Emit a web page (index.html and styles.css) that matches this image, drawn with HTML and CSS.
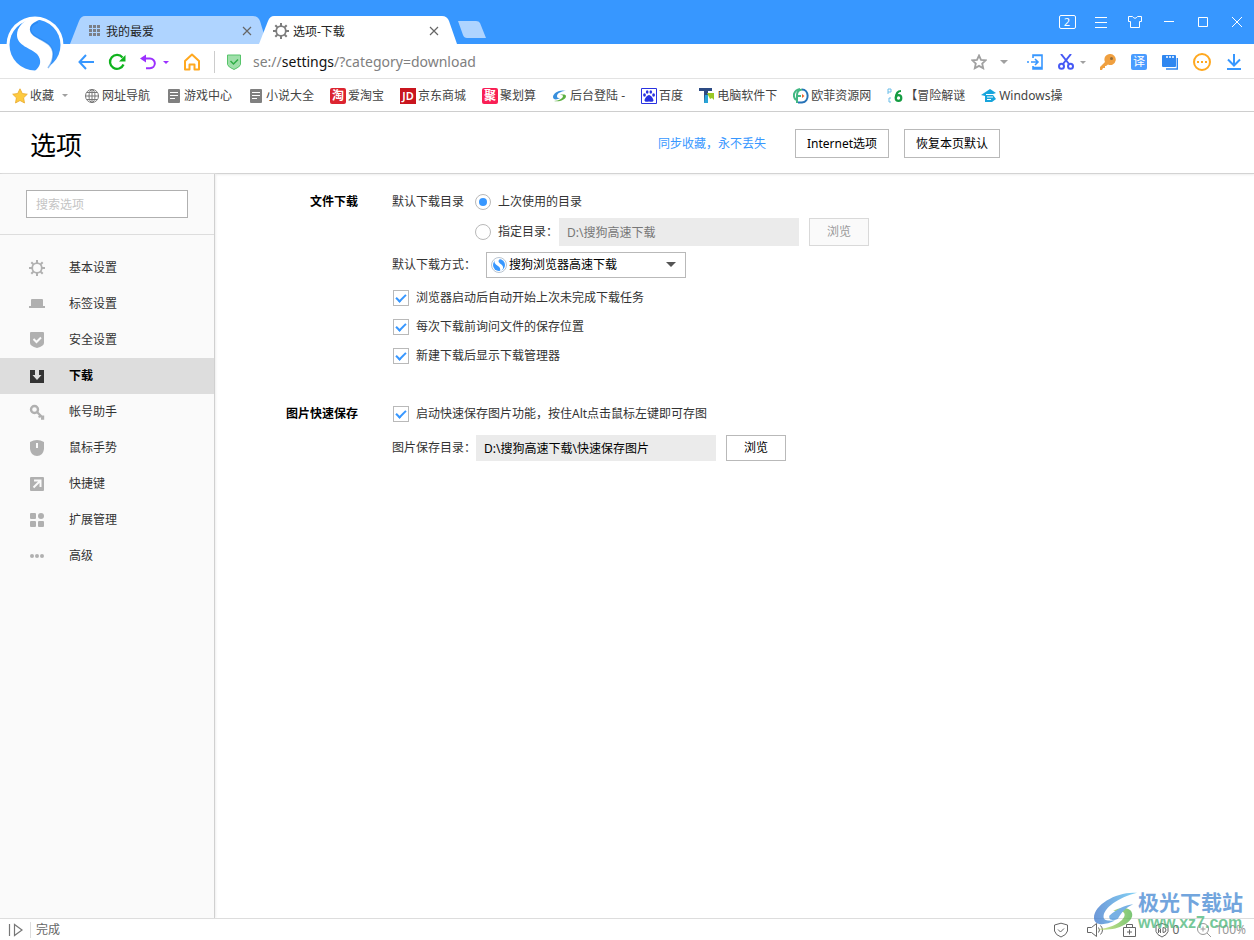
FILE: index.html
```html
<!DOCTYPE html>
<html lang="zh-CN">
<head>
<meta charset="utf-8">
<title>选项-下载</title>
<link rel="stylesheet" href="styles.css">
</head>
<body>
<div class="browser">
  <header class="titlebar">
    <svg class="logo" viewBox="0 0 58 58" aria-label="搜狗">
      <circle cx="29" cy="29" r="28.500" fill="#fff"/>
      <circle cx="29" cy="29" r="25.500" fill="#3797ff"/>
      <path d="M38 2C34 4 24 6 24 13 24 24 47 23 47 38 47 46 43 51 40 56L29 55C35 50 36 44 31 38 25 32 11 30 11 19 11 11 17 6 24 2Z" fill="#fff"/>
      <path d="M32 6C27 8 24.500 10 24.500 13.500 25 24 47 23 47 38 47 44 45 48 42 52" fill="none" stroke="#1b7be6" stroke-width="1.500" opacity=".5"/>
    </svg>
    <nav class="tabs">
      <div class="tab">
        <svg class="tab-bg" viewBox="0 0 197 28" preserveAspectRatio="none"><path d="M0 28 9 5Q11 0 15 0H183Q188 0 190 5L197 28Z" fill="#afd4ff"/></svg>
        <svg class="i16" viewBox="0 0 16 16" fill="#7b7f86"><path d="M0 2h3v3H0zM4 2h3v3H4zM8 2h3v3H8zM0 6h3v3H0zM4 6h3v3H4zM8 6h3v3H8zM0 10h3v3H0zM4 10h3v3H4zM8 10h3v3H8z"/></svg>
        <a class="tab-name" href="#">我的最爱</a>
        <button class="tab-close" aria-label="关闭"><svg viewBox="0 0 10 10"><path d="m1 1 8 8M9 1 1 9"/></svg></button>
      </div>
      <div class="tab tab-active">
        <svg class="tab-bg" viewBox="0 0 198 28" preserveAspectRatio="none"><path d="M0 28 9 5Q11 0 15 0H183Q188 0 190 5L198 28Z" fill="#fff"/></svg>
        <svg class="i16" viewBox="0 0 16 16" fill="none" stroke="#7d7d7d"><circle cx="8" cy="8" r="4.800" stroke-width="1.800"/><path stroke-width="2" d="M8 0v3M8 13v3M0 8h3M13 8h3M2.300 2.300l2 2M11.700 11.700l2 2M2.300 13.700l2-2M11.700 4.300l2-2"/></svg>
        <a class="tab-name" href="#">选项-下载</a>
        <button class="tab-close" aria-label="关闭"><svg viewBox="0 0 10 10"><path d="m1 1 8 8M9 1 1 9"/></svg></button>
      </div>
      <button class="new-tab" aria-label="新标签"><svg viewBox="0 0 28 17"><path d="M0 0H18Q21 0 22 2L28 17H9Q6 17 5 14Z" fill="#afd4ff"/></svg></button>
    </nav>
    <div class="window-buttons">
      <button aria-label="标签数量"><span class="count">2</span></button>
      <button aria-label="菜单"><svg viewBox="0 0 16 16"><path d="M2 3.500h12M2 8.500h12M2 13.500h12"/></svg></button>
      <button aria-label="皮肤"><svg viewBox="0 0 16 16"><path d="M5.500 2.500 1.500 2.500V7.500H3.500V13.500H12.500V7.500H14.500V2.500H10.500Q8 6 5.500 2.500Z"/></svg></button>
      <button aria-label="最小化"><svg viewBox="0 0 16 16"><path d="M3 7.500h10"/></svg></button>
      <button aria-label="最大化"><svg viewBox="0 0 16 16"><path d="M3.500 3.500h9v9h-9z"/></svg></button>
      <button aria-label="关闭窗口"><svg viewBox="0 0 16 16"><path d="m3 3 10 10M13 3 3 13"/></svg></button>
    </div>
  </header>

  <div class="toolbar">
    <div class="nav-buttons">
      <button aria-label="后退"><svg class="i16" viewBox="0 0 16 16" fill="none" stroke="#3797ff" stroke-width="2"><path d="M8 1 1.500 8 8 15M1.500 8H16"/></svg></button>
      <button aria-label="刷新"><svg class="i18" viewBox="0 0 18 18"><path d="M15.500 11.500A7 7 0 1 1 14.500 4.500" fill="none" stroke="#0fb31d" stroke-width="2.300"/><path d="M17.500 2v6.500H11z" fill="#0fb31d"/></svg></button>
      <button class="undo" aria-label="恢复"><svg class="i16" viewBox="0 0 16 16"><path d="M2 4.500H10a4.800 4.800 0 0 1 0 9.700H6" fill="none" stroke="#9b30ff" stroke-width="2"/><path d="M0 4.500 6 .5v8z" fill="#9b30ff"/></svg><svg class="caret" viewBox="0 0 6 3"><path d="M0 0h6L3 3z" fill="#9b30ff"/></svg></button>
      <button aria-label="主页"><svg class="i18" viewBox="0 0 18 18"><path d="M2 16.500V8L9 1.500 16 8V16.500H11.500V11.500H6.500V16.500Z" fill="none" stroke="#ffa81f" stroke-width="2" stroke-linejoin="round"/></svg></button>
    </div>
    <div class="address">
      <svg class="i16" viewBox="0 0 16 16"><path d="M1.500 1h13v9.500Q14 13 8 15.500 2 13 1.500 10.500Z" fill="#9fdfaa" stroke="#57c46a"/><path d="m4.500 7 3 3L12 5.500" fill="none" stroke="#2fae46" stroke-width="1.500"/></svg>
      <a class="url" href="#">se://<b>settings</b>/?category=download</a>
    </div>
    <div class="tools">
      <button class="tool-star" aria-label="收藏本页"><svg class="i16" viewBox="0 0 16 16"><path d="m8 1.500 2 4.300 4.700.5-3.500 3.200 1 4.700L8 11.900l-4.200 2.300 1-4.700L1.300 6.300 6 5.800z" fill="none" stroke="#a0a0a0" stroke-width="1.800"/></svg><svg class="caret-lg" viewBox="0 0 8 4"><path d="M0 0h8L4 4z" fill="#a0a0a0"/></svg></button>
      <button aria-label="发送到手机"><svg class="i16" viewBox="0 0 16 16" fill="none" stroke="#3797ff" stroke-width="1.600"><path d="M6 4V1h9v14H6v-3M6 1.500h9M6 13.500h9M0 8h2M4 8h7M8 5l3 3-3 3"/></svg></button>
      <button class="tool-cut" aria-label="截图"><svg class="i16" viewBox="0 0 16 16" fill="none" stroke="#4659f5" stroke-width="2"><path d="m3 0 8 10M13 0 5 10"/><circle cx="3.500" cy="12.200" r="2.500"/><circle cx="12.500" cy="12.200" r="2.500"/></svg><svg class="caret" viewBox="0 0 6 3"><path d="M0 0h6L3 3z" fill="#a0a0a0"/></svg></button>
      <button aria-label="密码"><svg class="i16" viewBox="0 0 16 16"><path d="M10 0a5.500 5.500 0 1 1-2 10.500L6 12H5v2H3l-1 2H0v-3l5-5A5.500 5.500 0 0 1 10 0z" fill="#f0a040"/><circle cx="11.500" cy="4.500" r="1.500" fill="#8d6a3c"/></svg></button>
      <button aria-label="翻译"><span class="translate">译</span></button>
      <button aria-label="多窗口"><svg class="i16" viewBox="0 0 16 16"><path d="M1 1h12q1 0 1 1v10q0 1-1 1H1q-1 0-1-1V2q0-1 1-1z" fill="#2f87f0"/><path d="M15.300 4v11H4" fill="none" stroke="#2f87f0" stroke-width="1.400"/><path d="M4 3h2M7 3h2M10 3h2" stroke="#fff" stroke-width="1.500"/></svg></button>
      <button aria-label="更多"><svg class="i18" viewBox="0 0 18 18"><circle cx="9" cy="9" r="8" fill="none" stroke="#ffa81f" stroke-width="2"/><path d="M4 8h2v2H4zM8 8h2v2H8zM12 8h2v2h-2z" fill="#ffa81f"/></svg></button>
      <button aria-label="下载"><svg class="i16" viewBox="0 0 16 16" fill="none" stroke="#3797ff" stroke-width="2"><path d="M8 0v11M2 5.500l6 6 6-6M1 15h14"/></svg></button>
    </div>
  </div>

  <nav class="bookmarks">
    <a href="#"><svg class="i16" viewBox="0 0 16 16"><path d="m8 .8 2.300 4.700 5 .7-3.700 3.600.9 5.200L8 12.500 3.500 15l.9-5.200L.7 6.200l5-.7z" fill="#fdca3f" stroke="#e8a82c" stroke-width=".8"/></svg>收藏<svg class="caret fav-caret" viewBox="0 0 6 3"><path d="M0 0h6L3 3z" fill="#a0a0a0"/></svg></a>
    <a href="#"><svg class="i16" viewBox="0 0 16 16" fill="none" stroke="#777"><circle cx="8" cy="8" r="6.500"/><ellipse cx="8" cy="8" rx="3" ry="6.500"/><path d="M1.500 8h13M8 1.500v13M3 4.500h10M3 11.500h10"/></svg>网址导航</a>
    <a href="#"><svg class="i16" viewBox="0 0 16 16"><rect x="2" y="1" width="12" height="14" rx="1" fill="#808080"/><path d="M4 4.500h8M4 7.500h8M4 10.500h5" stroke="#fff"/></svg>游戏中心</a>
    <a href="#"><svg class="i16" viewBox="0 0 16 16"><rect x="2" y="1" width="12" height="14" rx="1" fill="#808080"/><path d="M4 4.500h8M4 7.500h8M4 10.500h5" stroke="#fff"/></svg>小说大全</a>
    <a href="#"><span class="site red">淘</span>爱淘宝</a>
    <a href="#"><span class="site jd">JD</span>京东商城</a>
    <a href="#"><span class="site pink">聚</span>聚划算</a>
    <a href="#"><svg class="i16" viewBox="0 0 16 16"><path d="M14 3C8 1 1 5 1 9c0 3 4 3 7 1-2 0-3 0-3-2 0-3 5-5 9-5z" fill="#388fdc"/><path d="M8 7c4-1 6 0 6 1 0 4-7 6-12 5 5 0 9-3 9-5 0-1-1-1-3-1z" fill="#5caf41"/></svg>后台登陆 -</a>
    <a href="#"><svg class="i16" viewBox="0 0 16 16"><path d="M.5.500h15v15H.500z" fill="#fff" stroke="#2932e1"/><g fill="#2932e1"><ellipse cx="3.500" cy="7" rx="1.400" ry="1.800"/><ellipse cx="6.200" cy="4" rx="1.300" ry="1.800"/><ellipse cx="9.800" cy="4" rx="1.300" ry="1.800"/><ellipse cx="12.600" cy="7" rx="1.400" ry="1.800"/><path d="M8 7c2 0 4.500 4 4.500 5.500S10 14 8 13.500C6 14 3.500 14 3.500 12.500S6 7 8 7z"/></g></svg>百度</a>
    <a href="#"><svg class="i16" viewBox="0 0 16 16"><path d="M0 0h13v3H9v12H5V3H0z" fill="#2d4b84"/><path d="M6 7h3v8H5z" fill="#29a5d8"/><path d="M8 5h7v7l-2-2-2 1-2-4z" fill="#9ac927"/></svg>电脑软件下</a>
    <a href="#"><svg class="i16" viewBox="0 0 16 16" fill="none" stroke-width="2"><path d="M9 1.500c7 0 8 12 0 13H5" stroke="#2672b7"/><path d="M4 15V7q0-5 5-5.500" stroke="#42b883"/><path d="M3 12C-1 8 1 2 7 1M4 8h4" stroke="#42b883"/><path d="m9 6 2.500 2L9 10z" fill="#f0642d"/></svg>欧菲资源网</a>
    <a href="#"><svg class="i16" viewBox="0 0 16 16"><path d="M1 6V1h3v3H1M4 10H2v4h2" fill="none" stroke="#6bbde9"/><path d="M14 3q-5 0-5 7" fill="none" stroke="#159c42" stroke-width="2.200"/><circle cx="11.500" cy="10" r="2.800" fill="none" stroke="#159c42" stroke-width="2.200"/></svg>【冒险解谜</a>
    <a href="#"><svg class="i16" viewBox="0 0 16 16"><path d="M0 7 9 1l6 4-3 1v1l3 4-4 3H4V8z" fill="#18a5dc"/><path d="M5 6.500h7M6 9h6M6 11.500h4" stroke="#fff" stroke-width="1"/></svg>Windows操</a>
  </nav>

  <div class="page-head">
    <div class="head-inner">
      <h1>选项</h1>
      <a class="sync" href="#">同步收藏，永不丢失</a>
      <div class="head-buttons">
        <button class="btn">Internet选项</button>
        <button class="btn">恢复本页默认</button>
      </div>
    </div>
  </div>

  <div class="body">
    <aside class="sidebar">
      <div class="search"><input type="text" placeholder="搜索选项" aria-label="搜索选项"></div>
      <nav class="menu">
        <a href="#"><svg class="i16" viewBox="0 0 16 16" fill="none" stroke="#b0b0b0"><circle cx="8" cy="8" r="4.800" stroke-width="1.800"/><path stroke-width="2" d="M8 0v3M8 13v3M0 8h3M13 8h3M2.300 2.300l2 2M11.700 11.700l2 2M2.300 13.700l2-2M11.700 4.300l2-2"/></svg>基本设置</a>
        <a href="#"><svg class="i16" viewBox="0 0 16 16" fill="#b0b0b0"><path d="M2 4q0-1 1-1h10q1 0 1 1v6h2v2H0v-2h2z"/></svg>标签设置</a>
        <a href="#"><svg class="i16" viewBox="0 0 16 16"><path d="M1 1q0-1 1-1h12q1 0 1 1v10q0 3-7 5-7-2-7-5z" fill="#b0b0b0"/><path d="m4.500 7 3 3L12 5.500" fill="none" stroke="#fafafa" stroke-width="2"/></svg>安全设置</a>
        <a class="current" href="#"><svg class="i16" viewBox="0 0 16 16"><path d="M1 2h14v13H1z" fill="#333"/><path d="M6 2h4v5h2.500L8 12 3.500 7H6z" fill="#ddd"/></svg>下载</a>
        <a href="#"><svg class="i16" viewBox="0 0 16 16" fill="none" stroke="#b0b0b0"><circle cx="5.500" cy="5.500" r="3.500" stroke-width="2.400"/><path d="m8 8 6 6M11.500 11l-1.500 2.500M14 11.500v3h-2" stroke-width="2.400"/></svg>帐号助手</a>
        <a href="#"><svg class="i16" viewBox="0 0 16 16"><path d="M1 2Q8-2 15 2v7q-1 7-7 7T1 9z" fill="#b0b0b0"/><path d="M8 3v5" stroke="#fafafa" stroke-width="2"/></svg>鼠标手势</a>
        <a href="#"><svg class="i16" viewBox="0 0 16 16"><rect x="1" y="1" width="14" height="14" rx="1" fill="#b0b0b0"/><path d="M5 4.500h6.500V11M11 5l-6.500 6.500" fill="none" stroke="#fafafa" stroke-width="2"/></svg>快捷键</a>
        <a href="#"><svg class="i16" viewBox="0 0 16 16" fill="#b0b0b0"><rect x="1" y="1" width="6" height="6" rx="1"/><circle cx="12" cy="4" r="3"/><rect x="1" y="9" width="6" height="6" rx="1"/><rect x="9" y="9" width="6" height="6" rx="1"/></svg>扩展管理</a>
        <a href="#"><svg class="i16" viewBox="0 0 16 16" fill="#b0b0b0"><circle cx="3" cy="8" r="2"/><circle cx="8" cy="8" r="2"/><circle cx="13" cy="8" r="2"/></svg>高级</a>
      </nav>
    </aside>

    <main class="content">
      <section>
        <h2>文件下载</h2>
        <div class="fields">
          <div class="radio-grid">
            <span>默认下载目录</span>
            <label class="choice"><input type="radio" name="dir" checked>上次使用的目录</label>
            <div class="row dir-row">
              <label class="choice"><input type="radio" name="dir">指定目录：</label>
              <input class="path muted" type="text" value="D:\搜狗高速下载" aria-label="指定目录" disabled>
              <button class="btn browse" disabled>浏览</button>
            </div>
          </div>
          <div class="row method">
            <label for="method">默认下载方式：</label>
            <div class="select">
              <svg class="i16" viewBox="0 0 16 16"><circle cx="8" cy="8" r="7.500" fill="#fff" stroke="#b8c4d0"/><circle cx="8" cy="8" r="6" fill="#3797ff"/><path d="M4 3q2-2 5-1Q6 4 9 6.500q5 3 2 7l-2 .5q1-3-2-5Q2 6 4 3z" fill="#fff"/></svg>
              <select id="method"><option>搜狗浏览器高速下载</option></select>
              <svg class="select-arrow" viewBox="0 0 10 5"><path d="M0 0h10L5 5z" fill="#555"/></svg>
            </div>
          </div>
          <div class="checks">
            <label class="choice"><input type="checkbox" checked>浏览器启动后自动开始上次未完成下载任务</label>
            <label class="choice"><input type="checkbox" checked>每次下载前询问文件的保存位置</label>
            <label class="choice"><input type="checkbox" checked>新建下载后显示下载管理器</label>
          </div>
        </div>
      </section>
      <section>
        <h2>图片快速保存</h2>
        <div class="fields">
          <div class="checks">
            <label class="choice"><input type="checkbox" checked>启动快速保存图片功能，按住Alt点击鼠标左键即可存图</label>
          </div>
          <div class="row picture-row">
            <label for="pic">图片保存目录：</label>
            <input class="path" id="pic" type="text" value="D:\搜狗高速下载\快速保存图片" readonly>
            <button class="btn browse">浏览</button>
          </div>
        </div>
      </section>
    </main>
  </div>

  <footer class="status">
    <button class="side-toggle" aria-label="侧边栏"><svg class="i16" viewBox="0 0 16 16" fill="none" stroke="#777" stroke-width="1.200"><path d="M1.500 2v12M6.500 2.500v11L14 8z"/></svg></button>
    <span class="done">完成</span>
    <div class="status-icons">
      <svg class="i16" viewBox="0 0 16 16" fill="none" stroke="#666"><path d="M1.500 3 8 1.200 14.500 3v6q-1 4-6.500 6-5.500-2-6.500-6zM5 7.500l2.500 2.500L11 6.500"/></svg>
      <svg class="i18" viewBox="0 0 18 18" fill="none" stroke="#666"><path d="M1.500 6.500h4l5-4v13l-5-4h-4zM12.500 6.500q2 2.500 0 5M14.500 4.500q4 4.500 0 9"/></svg>
      <svg class="i16" viewBox="0 0 16 16" fill="none" stroke="#666"><path d="M2.500 5.500h12v9h-12zM5.500 5V2.500h6V5M8.500 7.500v5M6 10h5"/></svg>
      <span class="stat"><svg class="i16" viewBox="0 0 16 16" fill="none" stroke="#666"><path d="M2 3.500 8 1.500l6 2v6Q13 13 8 15 3 13 2 9.500z"/><path d="M4.500 11V7q1-2 2 0v4M4.500 9h2M9 5.500v5q3 0 3-2.500T9 5.500"/></svg>0</span>
      <span class="stat zoom"><svg class="i16" viewBox="0 0 16 16" fill="none" stroke="#999"><circle cx="7" cy="7" r="5.500"/><path d="m11 11 4 4M4.500 7h5M7 4.500v5"/></svg>100%</span>
    </div>
  </footer>

  <div class="watermark">
    <svg viewBox="0 0 46 42">
      <defs>
        <linearGradient id="wb" x1="0" x2="1"><stop stop-color="#3d76cb"/><stop offset="1" stop-color="#5bc5f3"/></linearGradient>
        <linearGradient id="wg" x1="0" x2="1"><stop stop-color="#c8dd66"/><stop offset="1" stop-color="#4fb348"/></linearGradient>
      </defs>
      <path d="M45 1C25-1 0 13 0 27c0 9 12 8 22 3-5 0-12 1-12-4C10 17 25 6 45 1z" fill="url(#wb)"/>
      <path d="M20 20c8-5 20-4 20 4 0 9-18 18-36 15 16-1 28-9 28-15 0-4-5-4-12-4z" fill="url(#wg)"/>
      <path d="M16 25c8-7 16-11 25-12-7 3-12 8-16 15-3 2-10 3-9-3z" fill="#4a97dc"/>
    </svg>
    <div class="mark-text"><strong>极光下载站</strong><span>www.xz7.com</span></div>
  </div>
</div>
</body>
</html>
```
FILE: styles.css
```css
* { box-sizing: border-box; }

body {
  margin: 0;
  background: #fff;
  color: #333;
  font: 12px/18px "Noto Sans", "Noto Sans CJK SC", sans-serif;
}

button, input, select { font: inherit; color: inherit; }
button { padding: 0; border: 0; background: none; }
a { color: inherit; text-decoration: none; }
svg { display: block; flex: none; }
h1, h2 { margin: 0; }

.i16 { width: 16px; height: 16px; }
.i18 { width: 18px; height: 18px; }
.caret { width: 6px; height: 3px; }
.caret-lg { width: 8px; height: 4px; }

.browser {
  position: relative;
  display: flex;
  flex-direction: column;
  min-height: 100vh;
}

/* Title bar */
.titlebar {
  position: relative;
  display: flex;
  justify-content: space-between;
  height: 44px;
  padding-left: 70px;
  background: #3797ff;
}
.logo {
  position: absolute;
  left: 6px;
  top: 16px;
  width: 58px;
  height: 58px;
}
.tabs { display: flex; align-items: flex-end; color: #222; }
.tab {
  position: relative;
  display: flex;
  align-items: center;
  width: 197px;
  height: 28px;
  padding: 2px 15px 0 19px;
}
.tab-active { width: 198px; margin-left: -8px; padding: 2px 18px 0 14px; }
.tab-active .tab-name { padding-left: 4px; }
.tab-bg { position: absolute; inset: 0; width: 100%; height: 100%; }
.tab > .i16, .tab-name, .tab-close { position: relative; }
.tab-name { flex: 1; padding: 2px 0 0 1px; }
.tab-close svg { width: 10px; height: 10px; stroke: #666; stroke-width: 1.2; }
.new-tab { margin: 0 0 6px 1px; }
.new-tab svg { width: 28px; height: 17px; }

.window-buttons { display: flex; color: #fff; }
.window-buttons button {
  display: flex;
  align-items: center;
  justify-content: center;
  width: 34px;
}
.window-buttons svg { width: 16px; height: 16px; fill: none; stroke: #fff; }
.count {
  width: 17px;
  height: 14px;
  border: 1px solid #fff;
  border-radius: 2px;
  font-size: 11px;
  line-height: 12px;
}

/* Toolbar */
.toolbar {
  display: flex;
  align-items: center;
  height: 35px;
  padding: 2px 12px 0 78px;
  border-bottom: 1px solid #e3e3e3;
}
.nav-buttons { display: flex; align-items: center; gap: 14px; }
.undo { display: flex; align-items: center; gap: 7px; }
.address {
  display: flex;
  flex: 1;
  align-items: center;
  gap: 11px;
  height: 22px;
  margin-left: 13px;
  padding-left: 11px;
  border-left: 1px solid #ccc;
}
.url { color: #808080; font-size: 14px; }
.url b { color: #111; font-weight: 400; }
.tools { display: flex; align-items: center; gap: 15px; }
.tool-star { display: flex; align-items: center; gap: 13px; margin-right: 4px; }
.tool-cut { display: flex; align-items: center; gap: 6px; margin-right: -1px; }
.translate {
  display: block;
  width: 16px;
  height: 16px;
  border-radius: 2px;
  background: #4a9cff;
  color: #fff;
  font-size: 12px;
  line-height: 16px;
}

/* Bookmarks */
.bookmarks {
  display: flex;
  align-items: center;
  gap: 16px;
  height: 33px;
  padding: 1px 0 0 12px;
  border-bottom: 1px solid #ccc;
  color: #444;
  white-space: nowrap;
}
.bookmarks a { display: flex; align-items: center; gap: 2px; }
.fav-caret { margin-left: 6px; }
.site {
  width: 16px;
  height: 16px;
  border-radius: 2px;
  color: #fff;
  font-size: 12px;
  font-weight: 700;
  line-height: 16px;
  text-align: center;
}
.red { background: #dc2430; }
.jd { border-radius: 0; background: #c9151e; font-size: 11px; font-weight: 600; }
.pink { background: #f91f55; }

/* Page heading */
.page-head {
  height: 62px;
  border-bottom: 1px solid #d3d3d3;
  box-shadow: 0 1px 2px #eee;
}
.head-inner {
  display: flex;
  align-items: center;
  max-width: 1000px;
  height: 61px;
  padding: 2px 0 0 30px;
}
h1 {
  flex: 1;
  padding-top: 3px;
  color: #000;
  font-size: 26px;
  font-weight: 400;
  line-height: 36px;
}
.sync { color: #3797ff; }
.head-buttons { display: flex; gap: 15px; margin-left: 29px; }
.btn {
  height: 28px;
  padding: 0 11px;
  border: 1px solid #b9b9b9;
  background: #fff;
  color: #000;
}
.head-buttons .btn { height: 29px; }
.browse { width: 60px; margin-left: 10px; padding: 0; }
.btn:disabled { border-color: #d9d9d9; background: #fafafa; color: #999; }

/* Sidebar */
.body { display: flex; flex: 1; }
.sidebar {
  width: 215px;
  border-right: 1px solid #d0d0d0;
  background: #fafafa;
  box-shadow: 1px 0 2px #eee;
}
.search { padding: 16px 26px; border-bottom: 1px solid #ddd; }
.search input {
  display: block;
  width: 100%;
  height: 28px;
  padding: 0 9px;
  border: 1px solid #b0b0b0;
  background: #fff;
}
.search input::placeholder { color: #c4c4c4; }
.menu { padding-top: 15px; }
.menu a {
  display: flex;
  align-items: center;
  gap: 24px;
  height: 36px;
  padding-left: 29px;
}
.menu .current { background: #ddd; color: #000; font-weight: 700; }

/* Settings */
.content { flex: 1; padding-top: 13px; }
section { display: flex; gap: 34px; margin-bottom: 35px; }
h2 {
  width: 143px;
  color: #000;
  font-size: 12px;
  line-height: 30px;
  text-align: right;
}
.row { display: flex; align-items: center; }
.radio-grid {
  display: grid;
  grid-template-columns: 83px auto;
  grid-auto-rows: 30px;
  align-items: center;
}
.dir-row { grid-column: 2; }
.choice { display: flex; align-items: center; gap: 7px; height: 16px; }
.choice input {
  position: relative;
  flex: none;
  width: 16px;
  height: 16px;
  margin: 0;
  border: 1px solid #b9b9b9;
  background: #fff;
  appearance: none;
}
.choice input[type="radio"] { border-radius: 50%; }
.choice input[type="radio"]:checked::after {
  position: absolute;
  inset: 3px;
  border-radius: 50%;
  background: #3797ff;
  content: "";
}
.choice input[type="checkbox"]:checked::after {
  position: absolute;
  left: 2px;
  top: 3px;
  width: 10px;
  height: 6px;
  box-sizing: border-box;
  border: solid #3797ff;
  border-width: 0 0 2px 2px;
  transform: rotate(-45deg);
  content: "";
}
.path {
  width: 240px;
  height: 28px;
  padding: 0 8px;
  border: 0;
  background: #ebebeb;
  color: #000;
}
.muted { margin-left: 1px; color: #777; }
.method { gap: 10px; height: 36px; }
.select { position: relative; width: 200px; }
.select select {
  display: block;
  width: 100%;
  height: 26px;
  padding: 0 22px;
  border: 1px solid #b9b9b9;
  border-radius: 0;
  background: #fff;
  color: #000;
  appearance: none;
}
.select .i16 { position: absolute; left: 5px; top: 5px; }
.select-arrow { position: absolute; right: 10px; top: 10px; width: 10px; height: 5px; }
.checks { display: grid; gap: 13px; padding: 7px 0 0 1px; }
.picture-row { margin-top: 13px; }
.picture-row .path, .picture-row .btn { height: 26px; }

/* Status bar */
.status {
  display: flex;
  align-items: center;
  height: 22px;
  padding: 0 8px;
  border-top: 1px solid #ddd;
  color: #666;
}
.side-toggle { width: 23px; border-right: 1px solid #ddd; }
.done { flex: 1; padding-left: 5px; }
.status-icons { display: flex; align-items: center; gap: 17px; }
.stat { display: flex; align-items: center; gap: 3px; }
.zoom { color: #999; }

/* Corner mark lies over the status bar */
.watermark {
  position: absolute;
  right: 11px;
  bottom: 7px;
  display: flex;
  align-items: center;
  opacity: .75;
  pointer-events: none;
}
.watermark svg { width: 44px; height: 42px; }
.mark-text { display: grid; line-height: 22px; }
.mark-text strong { color: #4387d2; font-size: 21px; }
.mark-text span { color: #48b678; font: 700 16px/20px "Liberation Sans", sans-serif; }
```
